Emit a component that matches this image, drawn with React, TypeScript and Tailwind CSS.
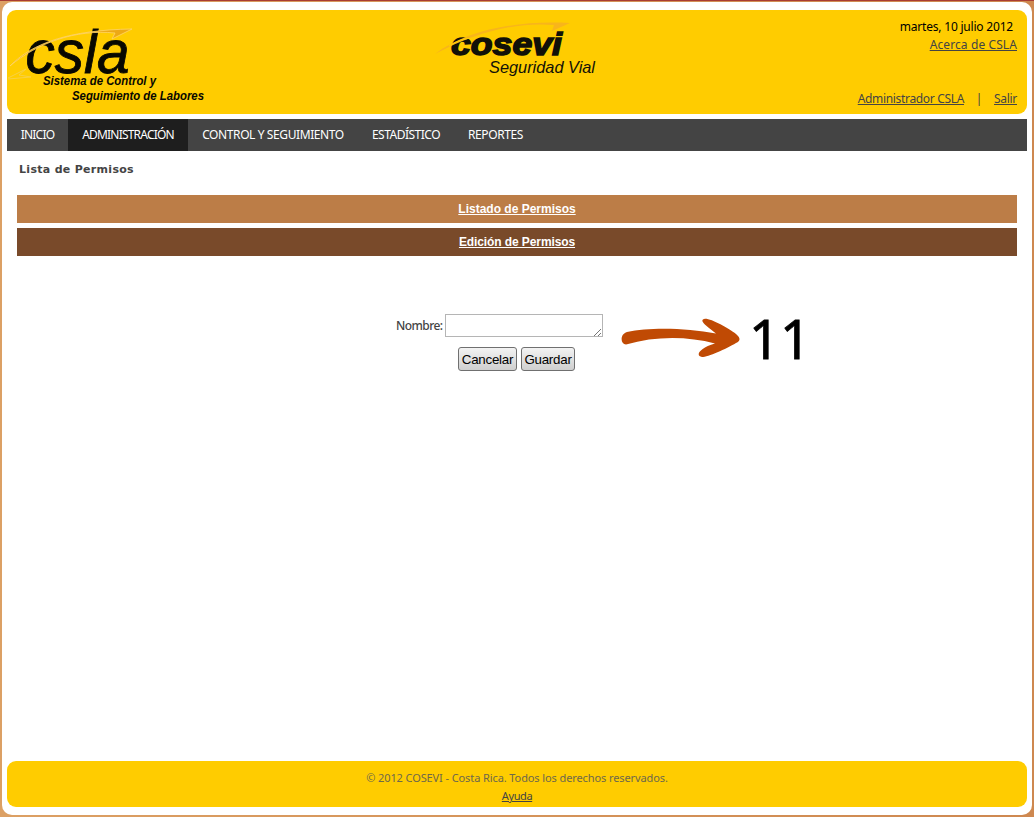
import React from "react";

const navItems = [
  { label: "INICIO", size: "w-[61px] tracking-[-0.8px]", active: false },
  { label: "ADMINISTRACIÓN", size: "w-[120px] tracking-[-0.8px]", active: true },
  { label: "CONTROL Y SEGUIMIENTO", size: "w-[170px] tracking-[-0.4px]", active: false },
  { label: "ESTADÍSTICO", size: "w-[96px] tracking-[-0.5px]", active: false },
  { label: "REPORTES", size: "w-[83px] tracking-[-0.4px]", active: false },
];

function CslaLogo() {
  return (
    <svg className="block h-[104px] w-[210px]" viewBox="7 10 210 104" role="img" aria-label="CSLA">
      <path d="M8 78 L26 69 L19 75 L31 77 L8 79" fill="none" stroke="#f8d044" strokeWidth="1" />
      <g fontFamily="Liberation Sans" fontStyle="italic" fill="#080800">
        <text x="25.5" y="73" fontSize="62" stroke="#080800" strokeWidth="0.9" textLength="104" lengthAdjust="spacingAndGlyphs">csla</text>
        <text x="43" y="85" fontSize="12" fontWeight="bold" textLength="113" lengthAdjust="spacingAndGlyphs">Sistema de Control y</text>
        <text x="72" y="99.5" fontSize="12" fontWeight="bold" textLength="132" lengthAdjust="spacingAndGlyphs">Seguimiento de Labores</text>
      </g>
      <path d="M10 66 C32 43 70 30 132 29 L112 39 L115 33 C76 29 37 43 10 66Z" fill="#eda915" stroke="#ffd66b" strokeWidth="0.8" />
    </svg>
  );
}

function CoseviLogo() {
  return (
    <svg className="block h-[64px] w-[180px]" viewBox="430 15 180 64" role="img" aria-label="Cosevi Seguridad Vial">
      <g fontFamily="Liberation Sans" fontStyle="italic" fill="#111108">
        <text x="451" y="55" fontSize="31.5" fontWeight="bold" stroke="#111108" strokeWidth="1.5" textLength="111" lengthAdjust="spacingAndGlyphs">cosevi</text>
        <text x="489" y="73" fontSize="17" textLength="106" lengthAdjust="spacingAndGlyphs">Seguridad Vial</text>
      </g>
      <path d="M435 54 C465 31 515 20 570 23 L552 31 L554 25 C517 22 479 31 435 54Z" fill="#f8b51b" />
      <path d="M449 46 Q461 38 474 38" fill="none" stroke="#ffcc00" strokeWidth="1.2" />
    </svg>
  );
}

function Header() {
  return (
    <header className="flex h-[104px] justify-between rounded-[9px] bg-[#ffcc00]">
      <CslaLogo />
      <div className="ml-[213px] pt-[5px]">
        <CoseviLogo />
      </div>
      <div className="flex flex-1 flex-col items-end pr-[10px] pt-2 text-[12px] leading-[18px] text-[#444]">
        <span className="mr-1 tracking-[-0.2px] text-black">martes, 10 julio 2012</span>
        <a href="#acerca" className="tracking-[0.1px] underline">Acerca de CSLA</a>
        <div className="mt-9 flex">
          <a href="#usuario" className="tracking-[-0.33px] underline">Administrador CSLA</a>
          <span className="w-[30px] text-center">|</span>
          <a href="#salir" className="tracking-[-0.3px] underline">Salir</a>
        </div>
      </div>
    </header>
  );
}

export default function App() {
  return (
    <div className="h-[817px] border-t border-[#a83c34] bg-linear-to-r from-[#dca064] to-[#ce8850] pb-[2px] pl-[2px] pr-[2px] pt-px font-['Noto_Sans',sans-serif]">
      <div className="flex h-[813px] flex-col rounded-[10px] bg-white px-[5px] pb-2 pt-2">
        <Header />
        <nav className="mt-[5px] flex h-8 shrink-0 bg-[#444] text-[12px] text-white">
          {navItems.map((item) => (
            <a key={item.label} href="#menu" className={`flex items-center justify-center whitespace-nowrap ${item.size} ${item.active ? "bg-[#1e1e1e]" : ""}`}>
              {item.label}
            </a>
          ))}
        </nav>
        <main className="flex-1 px-[10px]">
          <h1 className="h-11 pl-[2px] pt-[9px] font-['DejaVu_Sans',sans-serif] text-[11px] font-bold leading-[19px] tracking-[0.3px] text-[#444]">Lista de Permisos</h1>
          <div className="flex flex-col gap-[5px] text-center font-['Liberation_Sans',sans-serif] text-[12px] font-bold leading-7 text-white">
            <a href="#listado" className="h-7 bg-[#bc7d47] underline">Listado de Permisos</a>
            <a href="#edicion" className="h-7 bg-[#794a2a] tracking-[-0.1px] underline">Edición de Permisos</a>
          </div>
          <div className="flex pl-[379px] pt-[58px]">
            <form className="w-[207px]">
              <div className="flex items-center">
                <label htmlFor="nombre" className="w-[49px] text-[12px] font-medium leading-5 tracking-[-0.55px] text-[#444]">Nombre:</label>
                <div className="relative h-[23px] w-[158px]">
                  <textarea id="nombre" className="block h-[23px] w-[158px] resize-none border border-[#b5b5b5] bg-white outline-none" />
                  <svg className="absolute bottom-[1px] right-[1px] h-2 w-2" viewBox="0 0 8 8" fill="none" stroke="#666" strokeWidth="0.9">
                    <path d="M0 8 L7 1 M4 8 L7 5" />
                  </svg>
                </div>
              </div>
              <div className="ml-[62px] mt-[10px] flex gap-1 font-['Liberation_Sans',sans-serif] text-[13.33px] leading-[22px] tracking-[-0.25px] text-black">
                <button type="button" className="h-6 w-[59px] rounded-[3px] border border-[#707070] bg-linear-to-b from-[#f3f3f3] to-[#cfcfcf] pt-px">Cancelar</button>
                <button type="button" className="h-6 w-[54px] rounded-[3px] border border-[#707070] bg-linear-to-b from-[#f3f3f3] to-[#cfcfcf] pt-px">Guardar</button>
              </div>
            </form>
            <svg className="ml-[17px] h-[45px] w-[122px]" viewBox="620 314 122 45">
              <path d="M626 344.5 C620 344 620 334 627 332 C650 327 687 328 716 333.5 C708 327 700 322 703 319.5 C707 316 728 328 736 334 Q743 340 736 343 C726 349 708 357 702 357 C695 356 699 348 715 343.5 C687 336 655 336 626 344.5Z" fill="#c04a04" />
            </svg>
            <span className="ml-[7px] font-['Noto_Sans',sans-serif] text-[54px] leading-[48px] text-black [-webkit-text-stroke:0.8px_black]">11</span>
          </div>
        </main>
        <footer className="flex h-[46px] shrink-0 flex-col items-center rounded-[9px] bg-[#ffcc00] pt-2 text-[11px] leading-[18px]">
          <p className="tracking-[-0.1px] text-[#6e684c]">© 2012 COSEVI - Costa Rica. Todos los derechos reservados.</p>
          <a href="#ayuda" className="tracking-[-0.4px] text-[#444] underline">Ayuda</a>
        </footer>
      </div>
    </div>
  );
}
